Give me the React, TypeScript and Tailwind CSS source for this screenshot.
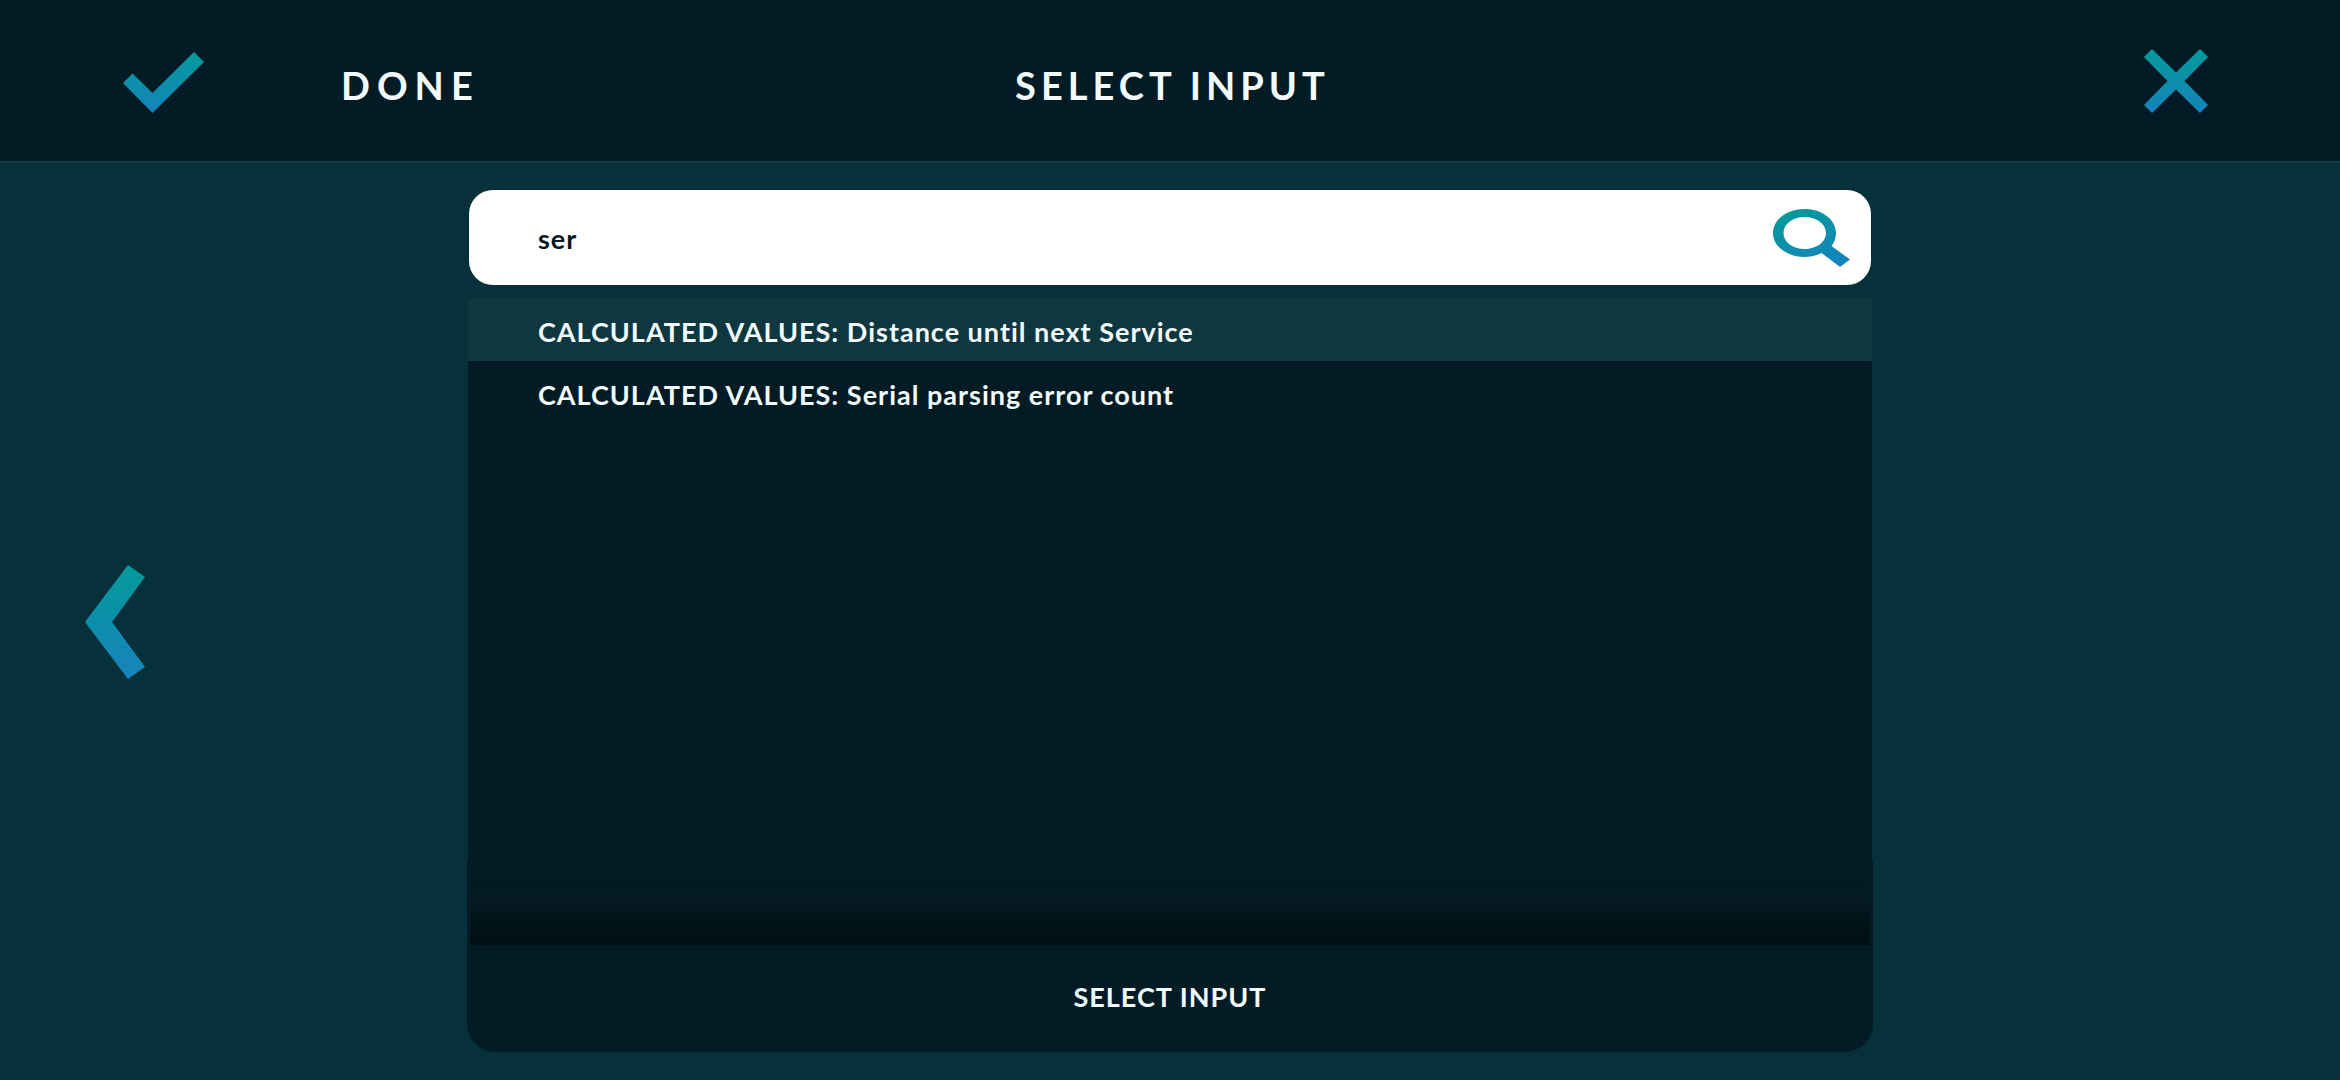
import { useState } from 'react';

const results = [
  'CALCULATED VALUES: Distance until next Service',
  'CALCULATED VALUES: Serial parsing error count',
];

function Gradient({ id }: { id: string }) {
  return (
    <defs>
      <linearGradient id={id} x1="0" y1="0" x2="0" y2="1">
        <stop offset="0" stopColor="#049a99" />
        <stop offset="1" stopColor="#1683bd" />
      </linearGradient>
    </defs>
  );
}

function CheckIcon() {
  return (
    <svg viewBox="0 0 81 61" className="w-[81px] h-[61px]" aria-hidden="true">
      <Gradient id="check" />
      <path d="M71 0 L81 10 L29.500 61 L0 31 L9.500 21.500 L29.500 41 Z" fill="url(#check)" />
    </svg>
  );
}

function CloseIcon() {
  return (
    <svg viewBox="0 0 64 64" className="size-16" aria-hidden="true">
      <Gradient id="close" />
      <path
        d="M8 0 L32 23.500 L56 0 L64 8 L40.500 32 L64 56 L56 64 L32 40.500 L8 64 L0 56 L23.500 32 L0 8 Z"
        fill="url(#close)"
      />
    </svg>
  );
}

function ChevronIcon() {
  return (
    <svg viewBox="0 0 60 114" className="w-[60px] h-[114px]" aria-hidden="true">
      <Gradient id="chevron" />
      <path d="M43 0 L60 12 L27 57 L60 102 L43 114 L0 57 Z" fill="url(#chevron)" />
    </svg>
  );
}

function SearchIcon() {
  return (
    <svg viewBox="0 0 77 58" className="w-[77px] h-[58px]" aria-hidden="true">
      <defs>
        <linearGradient id="search" x1="0.2" y1="0" x2="0.8" y2="1">
          <stop offset="0" stopColor="#049a99" />
          <stop offset="1" stopColor="#1683bd" />
        </linearGradient>
      </defs>
      <path
        fillRule="evenodd"
        d="M31.500 0 C49 0 63 10.500 63 24 C63 29 61.500 33 58.500 37 L77 50.500 L67 58 L48.500 44 C43.500 46.500 37.500 48 31.500 48 C14 48 0 37.500 0 24 C0 10.500 14 0 31.500 0 Z M31.500 8 C19.500 8 10.500 15 10.500 24 C10.500 33 19.500 40 31.500 40 C43.500 40 53 33 53 24 C53 15 43.500 8 31.500 8 Z"
        fill="url(#search)"
      />
    </svg>
  );
}

export default function App() {
  const [query, setQuery] = useState('ser');
  const [selected, setSelected] = useState(0);

  return (
    <div className="min-h-screen flex flex-col bg-[#06313a] text-[#f2fbfd] font-['Lato',sans-serif] font-bold">
      {/* Header */}
      <header className="grid grid-cols-[1fr_auto_1fr] items-center h-[163px] bg-[#021b24] border-b-2 border-[#0f3b43]">
        <button type="button" className="flex items-center gap-[137px] pl-[123px] pt-1 text-left">
          <CheckIcon />
          <span className="pt-1 text-[38px] leading-[46px] tracking-[7px]">DONE</span>
        </button>
        <h1 className="pt-2 pl-[5px] text-[38px] leading-[46px] tracking-[5px]">SELECT INPUT</h1>
        <button type="button" aria-label="Close" className="justify-self-end pr-[132px]">
          <CloseIcon />
        </button>
      </header>

      <main className="flex-1 grid grid-cols-[1fr_60%_1fr]">
        <button type="button" aria-label="Back" className="justify-self-start pl-[85px]">
          <ChevronIcon />
        </button>

        {/* Search and results */}
        <section className="flex flex-col pt-[27px] pb-7 text-[27px] leading-[34px] tracking-[1px]">
          <label className="flex items-center mx-px h-[95px] pl-[69px] pr-[21px] rounded-[24px] bg-white text-[#021b24]">
            <input
              type="text"
              aria-label="Search inputs"
              value={query}
              onChange={(e) => setQuery(e.target.value)}
              className="flex-1 min-w-0 pt-0.5 text-[27px] leading-[34px] tracking-[1px] outline-none"
            />
            <SearchIcon />
          </label>

          <ul className="flex-1 mt-[13px] bg-[#021b24]">
            {results.map((label, i) => (
              <li key={label}>
                <button
                  type="button"
                  onClick={() => setSelected(i)}
                  className={`w-full h-[63px] pl-[70px] pt-1 text-left ${i === selected ? 'bg-[#0e3740]' : ''}`}
                >
                  {label}
                </button>
              </li>
            ))}
          </ul>

          {/* Footer */}
          <div className="-mx-px rounded-b-[28px] overflow-hidden bg-[#021b24]">
            <div className="mx-[3px] h-[85px] bg-[linear-gradient(to_bottom,#021b24_0%,#041923_58%,#01171b_62%,#000f14_100%)]" />
            <button type="button" className="w-full h-[107px] pb-1">
              SELECT INPUT
            </button>
          </div>
        </section>
      </main>
    </div>
  );
}
